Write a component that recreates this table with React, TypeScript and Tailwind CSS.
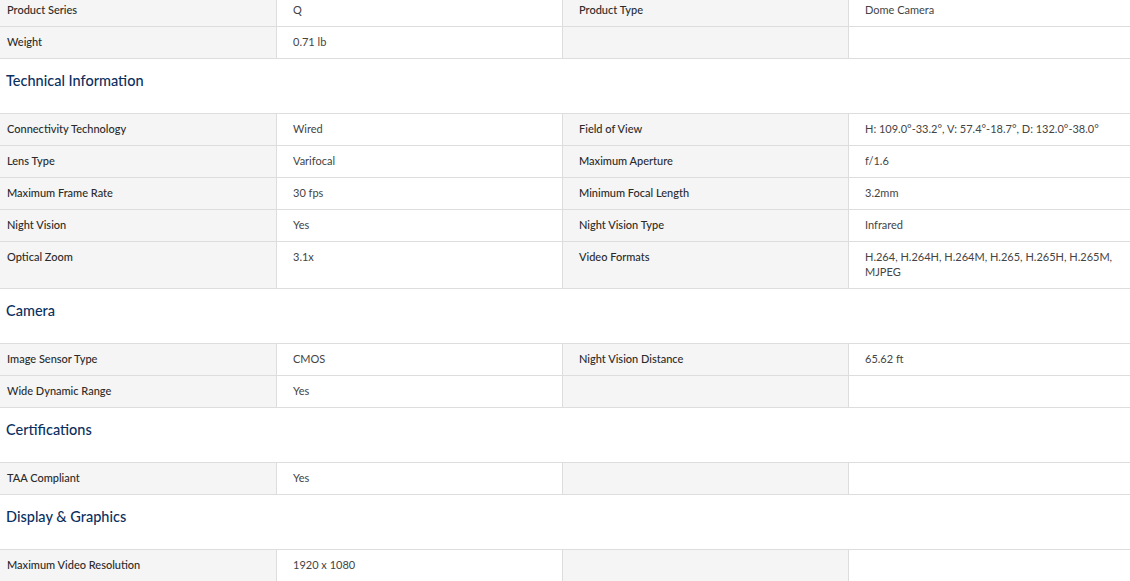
import React from "react";

type Row = [string, string, string, string];
type Section = { title?: string; rows: Row[] };

const sections: Section[] = [
  {
    rows: [
      ["Product Series", "Q", "Product Type", "Dome Camera"],
      ["Weight", "0.71 lb", "", ""],
    ],
  },
  {
    title: "Technical Information",
    rows: [
      ["Connectivity Technology", "Wired", "Field of View", "H: 109.0°-33.2°, V: 57.4°-18.7°, D: 132.0°-38.0°"],
      ["Lens Type", "Varifocal", "Maximum Aperture", "f/1.6"],
      ["Maximum Frame Rate", "30 fps", "Minimum Focal Length", "3.2mm"],
      ["Night Vision", "Yes", "Night Vision Type", "Infrared"],
      ["Optical Zoom", "3.1x", "Video Formats", "H.264, H.264H, H.264M, H.265, H.265H, H.265M, MJPEG"],
    ],
  },
  {
    title: "Camera",
    rows: [
      ["Image Sensor Type", "CMOS", "Night Vision Distance", "65.62 ft"],
      ["Wide Dynamic Range", "Yes", "", ""],
    ],
  },
  {
    title: "Certifications",
    rows: [["TAA Compliant", "Yes", "", ""]],
  },
  {
    title: "Display & Graphics",
    rows: [["Maximum Video Resolution", "1920 x 1080", "", ""]],
  },
];

function SpecRow({ row }: { row: Row }) {
  return (
    <div className="grid grid-cols-[277px_286px_286px_1fr] border-b border-[#dddddd]">
      <div className="bg-[#f5f5f5] border-r border-[#dddddd] pl-[7px] pr-4 pt-[7px] pb-[9px] text-[11px] leading-[15px] font-medium text-[#2b2b2b]">
        {row[0]}
      </div>
      <div className="bg-white border-r border-[#dddddd] px-4 pt-[7px] pb-[9px] text-[11px] leading-[15px] text-[#444444]">
        {row[1]}
      </div>
      <div className="bg-[#f5f5f5] border-r border-[#dddddd] px-4 pt-[7px] pb-[9px] text-[11px] leading-[15px] font-medium text-[#2b2b2b]">
        {row[2]}
      </div>
      <div className="bg-white pl-4 pr-3 pt-[7px] pb-[9px] text-[11px] leading-[15px] text-[#444444]">
        {row[3]}
      </div>
    </div>
  );
}

export default function App() {
  return (
    <div
      className="w-[1130px] h-[581px] overflow-hidden bg-white"
      style={{ fontFamily: "Lato, 'Noto Sans', sans-serif" }}
    >
      <div className="-mt-[5px]">
        {sections.map((s, i) => (
          <div key={i}>
            {s.title && (
              <div className="h-[55px] border-b border-[#dddddd] pl-[6px] pt-[12px] text-[14.5px] leading-[20px] font-medium text-[#0b2f5e]">
                {s.title}
              </div>
            )}
            {s.rows.map((r, j) => (
              <SpecRow key={j} row={r} />
            ))}
          </div>
        ))}
      </div>
    </div>
  );
}
